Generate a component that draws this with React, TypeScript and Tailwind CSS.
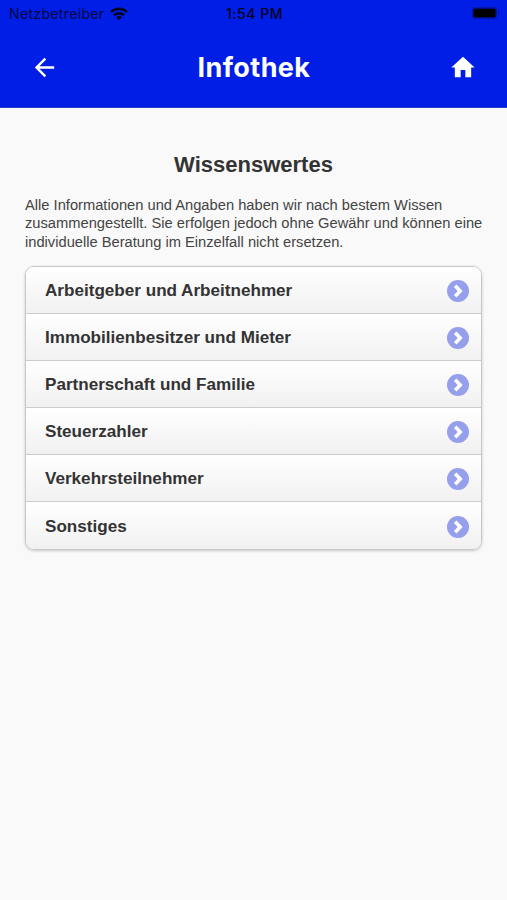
const topics = [
  'Arbeitgeber und Arbeitnehmer',
  'Immobilienbesitzer und Mieter',
  'Partnerschaft und Familie',
  'Steuerzahler',
  'Verkehrsteilnehmer',
  'Sonstiges',
];

function StatusBar() {
  return (
    <div className="h-7 pl-[9px] pr-[7px] grid grid-cols-3 items-center font-['Inter',sans-serif] text-sm text-[#000320]">
      <div className="flex items-center gap-1.5">
        <span className="tracking-[0.35px] text-[#00063c]">Netzbetreiber</span>
        <svg className="-mt-0.5" width="18" height="13" viewBox="0 0 18 13" fill="none" stroke="currentColor" strokeWidth="2.4">
          <path d="M1 5a11.4 11.4 0 0 1 16 0" />
          <path d="M4 8.3a7.1 7.1 0 0 1 10 0" />
          <path d="M9 13 6.2 10.4a4 4 0 0 1 5.6 0z" fill="currentColor" stroke="none" />
        </svg>
      </div>
      <span className="text-center font-medium tracking-[0.5px]">1:54 PM</span>
      <svg className="justify-self-end -mt-0.5" width="28" height="12" viewBox="0 0 28 12">
        <rect x="0" y="0" width="25" height="12" rx="3" fill="currentColor" opacity="0.3" />
        <rect x="1.5" y="1.8" width="22" height="8.4" rx="1.5" fill="black" />
        <path d="M26 4v4c1.5-.6 1.5-3.4 0-4" fill="currentColor" opacity="0.4" />
      </svg>
    </div>
  );
}

export default function App() {
  return (
    <div className="min-h-screen bg-[#f9f9f9] font-['Liberation_Sans',Arial,sans-serif] text-[#333333]">
      <header className="h-[108px] bg-[#001ee6] border-b border-[#2a3cc8]">
        <StatusBar />
        <div className="h-[78px] pl-[30px] pr-[30px] flex items-center justify-between text-white">
          <button aria-label="Zurück">
            <svg width="29" height="29" viewBox="0 0 24 24" fill="currentColor">
              <path d="M20 11H7.83l5.59-5.59L12 4l-8 8 8 8 1.41-1.41L7.83 13H20v-2z" />
            </svg>
          </button>
          <h1 className="pt-0.5 font-['Inter',sans-serif] text-[27px] font-bold tracking-[0.4px]">Infothek</h1>
          <button aria-label="Start">
            <svg width="28" height="29" viewBox="0 0 24 24" preserveAspectRatio="none" fill="currentColor">
              <path d="M10 20v-6h4v6h5v-8h3L12 3 2 12h3v8z" />
            </svg>
          </button>
        </div>
      </header>

      <main className="px-[25px] pt-[43px]">
        <h2 className="text-center text-[22px] leading-7 font-bold">Wissenswertes</h2>
        <p className="mt-[17px] text-[14.7px] leading-[18.3px] whitespace-nowrap text-[#444444]">
          Alle Informationen und Angaben haben wir nach bestem Wissen
          <br />
          zusammengestellt. Sie erfolgen jedoch ohne Gewähr und können eine
          <br />
          individuelle Beratung im Einzelfall nicht ersetzen.
        </p>

        <ul className="mt-[15px] rounded-[9px] overflow-hidden border border-[#c8c8c8] shadow-[0_1px_3px_rgba(0,0,0,0.2)] divide-y divide-[#cccccc]">
          {topics.map((topic) => (
            <li
              key={topic}
              className="h-[47.1px] pt-0.5 pl-[19px] pr-[11px] flex items-center justify-between bg-gradient-to-b from-white to-[#f1f1f1]"
            >
              <span className="text-[17.1px] leading-6 font-bold">{topic}</span>
              <svg width="24" height="24" viewBox="0 0 24 24" fill="none">
                <circle cx="12" cy="12" r="11" fill="#959fec" />
                <path d="m9.2 6.8 5 5.2-5 5.2" stroke="white" strokeWidth="3.6" />
              </svg>
            </li>
          ))}
        </ul>
      </main>
    </div>
  );
}
